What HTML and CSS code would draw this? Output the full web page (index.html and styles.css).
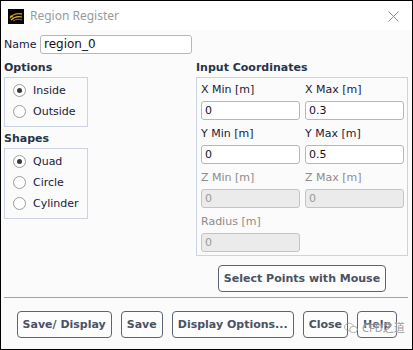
FILE: index.html
```html
<!DOCTYPE html>
<html lang="en">
<head>
    <meta charset="UTF-8">
    <title>Region Register</title>
    <link rel="stylesheet" href="styles.css">
</head>
<body>
    <div class="window">
        <div class="titlebar">
            <svg class="app-icon" width="16" height="15" viewBox="0 0 16 15">
                <rect width="16" height="15" fill="#050505"/>
                <path d="M2 9 C5 5, 9 4, 14 5" stroke="#c8961e" stroke-width="1.4" fill="none"/>
                <path d="M3 11 C6 8, 10 7, 14 8" stroke="#e0b030" stroke-width="1.2" fill="none"/>
                <path d="M5 12 C8 10, 11 10, 14 11" stroke="#a87818" stroke-width="1" fill="none"/>
                <path d="M2 7 L5 8" stroke="#e0b030" stroke-width="1.2"/>
            </svg>
            <span class="title">Region Register</span>
            <svg class="close-x" width="11" height="11" viewBox="0 0 11 11">
                <path d="M0.5 0.5 L10.5 10.5 M10.5 0.5 L0.5 10.5" stroke="#8a8a8a" stroke-width="1"/>
            </svg>
        </div>

        <div class="content">
            <div class="name-row">
                <span class="name-label">Name</span>
                <div class="field name-field">region_0</div>
            </div>

            <div class="panels">
                <div class="left-col">
                    <div class="group-title">Options</div>
                    <div class="group-box">
                        <div class="radio checked"><span class="circle"></span>Inside</div>
                        <div class="radio"><span class="circle"></span>Outside</div>
                    </div>
                    <div class="group-title">Shapes</div>
                    <div class="group-box">
                        <div class="radio checked"><span class="circle"></span>Quad</div>
                        <div class="radio"><span class="circle"></span>Circle</div>
                        <div class="radio"><span class="circle"></span>Cylinder</div>
                    </div>
                </div>

                <div class="right-col">
                    <div class="group-title">Input Coordinates</div>
                    <div class="group-box coords">
                        <div class="cell">
                            <div class="cell-label">X Min [m]</div>
                            <div class="field">0</div>
                        </div>
                        <div class="cell">
                            <div class="cell-label">X Max [m]</div>
                            <div class="field">0.3</div>
                        </div>
                        <div class="cell">
                            <div class="cell-label">Y Min [m]</div>
                            <div class="field">0</div>
                        </div>
                        <div class="cell">
                            <div class="cell-label">Y Max [m]</div>
                            <div class="field">0.5</div>
                        </div>
                        <div class="cell disabled">
                            <div class="cell-label">Z Min [m]</div>
                            <div class="field">0</div>
                        </div>
                        <div class="cell disabled">
                            <div class="cell-label">Z Max [m]</div>
                            <div class="field">0</div>
                        </div>
                        <div class="cell disabled">
                            <div class="cell-label">Radius [m]</div>
                            <div class="field">0</div>
                        </div>
                    </div>
                    <div class="select-row">
                        <div class="btn">Select Points with Mouse</div>
                    </div>
                </div>
            </div>

            <div class="separator"></div>

            <div class="button-row">
                <div class="btn">Save/ Display</div>
                <div class="btn">Save</div>
                <div class="btn">Display Options...</div>
                <div class="btn">Close</div>
                <div class="btn">Help</div>
            </div>
        </div>

        <!-- Wasserzeichen unten rechts -->
        <div class="watermark">
            <svg width="14" height="12" viewBox="0 0 14 12">
                <ellipse cx="5" cy="5" rx="4.5" ry="3.8" fill="none" stroke="#9a9a9a" stroke-width="0.9"/>
                <ellipse cx="9.5" cy="7.5" rx="3.8" ry="3.2" fill="#fff" stroke="#9a9a9a" stroke-width="0.9"/>
            </svg>
            <span>CFD之道</span>
        </div>
    </div>
</body>
</html>
```

FILE: styles.css
```css
body {
    margin: 0;
    padding: 0;
    background-color: #ffffff;
    font-family: "DejaVu Sans", Verdana, sans-serif;
    font-size: 11px;
    color: #1a1a38;
}
.window {
    position: relative;
    width: 413px;
    height: 350px;
    box-sizing: border-box;
    border: 1px solid #000000;
    background-color: #fbfbfb;
    overflow: hidden;
}
.titlebar {
    height: 29px;
    background-color: #ffffff;
    display: flex;
    align-items: center;
    padding: 0 13px 0 7px;
}
.app-icon {
    margin-top: 1px;
}
.title {
    font-family: "Noto Sans", "Open Sans", sans-serif;
    font-size: 12px;
    color: #9a9a9a;
    margin-left: 6px;
    flex: 1;
}
.close-x {
    margin-top: 1px;
}
.content {
    padding: 5px 4px 0 3px;
}
.name-row {
    display: flex;
    align-items: center;
    height: 19px;
}
.name-label {
    width: 36px;
}
.field {
    box-sizing: border-box;
    height: 19px;
    line-height: 17px;
    padding: 0 3px;
    border: 1px solid #b3b7c0;
    border-radius: 3px;
    background-color: #ffffff;
    color: #111122;
    white-space: nowrap;
}
.name-field {
    width: 152px;
    font-size: 12px;
}
.panels {
    display: flex;
    justify-content: space-between;
    margin-top: 6px;
}
.left-col {
    width: 84px;
}
.right-col {
    width: 212px;
}
.group-title {
    font-weight: bold;
    color: #27344a;
    line-height: 16px;
    margin-bottom: 1px;
}
.group-box {
    border: 1px solid #cbd2e0;
    padding: 2px 0 4px 8px;
    margin-bottom: 4px;
}
.radio {
    display: flex;
    align-items: center;
    height: 21px;
}
.circle {
    box-sizing: border-box;
    width: 13px;
    height: 13px;
    border: 1px solid #9c9c9c;
    border-radius: 50%;
    background-color: #ffffff;
    margin-right: 7px;
    display: flex;
    align-items: center;
    justify-content: center;
}
.radio.checked .circle:before {
    content: "";
    width: 5px;
    height: 5px;
    border-radius: 50%;
    background-color: #3a3a3a;
}
.coords {
    display: grid;
    grid-template-columns: 99px 99px;
    column-gap: 5px;
    row-gap: 2px;
    padding: 0 3px 3px 4px;
    margin-bottom: 0;
}
.cell-label {
    line-height: 23px;
}
.cell.disabled .cell-label {
    color: #8c8c8c;
}
.cell.disabled .field {
    background-color: #ebebeb;
    border-color: #c4c4c4;
    color: #9a9a9a;
}
.select-row {
    display: flex;
    justify-content: center;
    margin-top: 9px;
}
.btn {
    box-sizing: border-box;
    height: 27px;
    line-height: 25px;
    padding: 0 5px;
    border: 1px solid #5c6373;
    border-radius: 4px;
    background-color: #fdfdfd;
    font-weight: bold;
    font-size: 11px;
    color: #4a5264;
    white-space: nowrap;
}
.separator {
    height: 1px;
    background-color: #a3a3a3;
    margin-top: 5px;
}
.button-row {
    display: flex;
    justify-content: center;
    gap: 9px;
    margin-top: 13px;
    padding-left: 2px;
}
.watermark {
    position: absolute;
    left: 343px;
    top: 318px;
    display: flex;
    align-items: flex-end;
    gap: 4px;
    font-family: "Noto Sans", "Noto Sans CJK SC", sans-serif;
    font-size: 11px;
    color: #8a8a8a;
    opacity: 0.85;
    text-shadow: 0 0 2px #ffffff, 0 0 2px #ffffff;
}
.watermark svg {
    margin-bottom: 1px;
}
```
